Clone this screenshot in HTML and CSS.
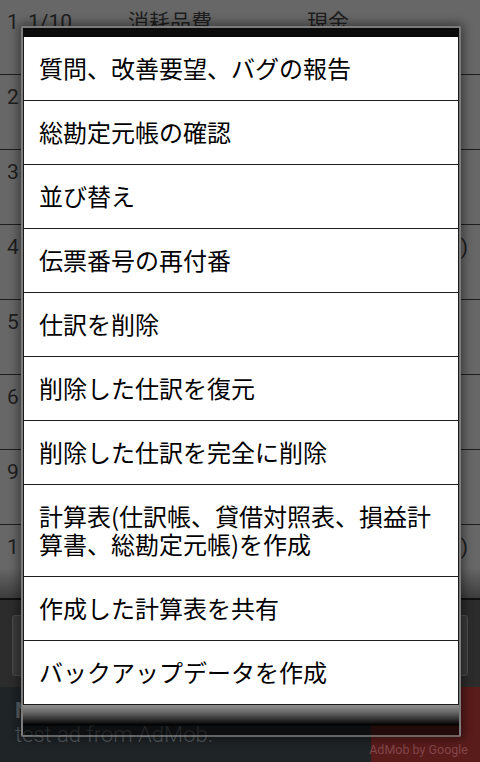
FILE: index.html
```html
<!DOCTYPE html>
<html lang="ja">
<head>
<meta charset="utf-8">
<title>仕訳帳</title>
<link rel="stylesheet" href="styles.css">
</head>
<body>
<div class="screen">
  <div class="app">
    <ul class="journal">
      <li class="row"><span class="no">1</span><span class="date">1/10</span><span class="debit">消耗品費</span><span class="credit">現金</span><span class="amount"></span></li>
      <li class="row"><span class="no">2</span></li>
      <li class="row"><span class="no">3</span></li>
      <li class="row"><span class="no">4</span><span class="date"></span><span class="debit"></span><span class="credit"></span><span class="amount">)</span></li>
      <li class="row"><span class="no">5</span></li>
      <li class="row"><span class="no">6</span></li>
      <li class="row"><span class="no">9</span></li>
      <li class="row"><span class="no">1</span><span class="date"></span><span class="debit"></span><span class="credit"></span><span class="amount">)</span></li>
    </ul>
    <div class="toolbar">
      <div class="tool-button"></div>
    </div>
    <div class="ad">
      <div class="ad-text"><b>N</b><br>test ad from AdMob.</div>
      <div class="ad-brand"><span>AdMob by Google</span></div>
    </div>
  </div>

  <div class="dialog">
    <div class="dialog-head"></div>
    <ul class="menu">
      <li class="menu-item">質問、改善要望、バグの報告</li>
      <li class="menu-item">総勘定元帳の確認</li>
      <li class="menu-item">並び替え</li>
      <li class="menu-item">伝票番号の再付番</li>
      <li class="menu-item">仕訳を削除</li>
      <li class="menu-item">削除した仕訳を復元</li>
      <li class="menu-item">削除した仕訳を完全に削除</li>
      <li class="menu-item">計算表(仕訳帳、貸借対照表、損益計算書、総勘定元帳)を作成</li>
      <li class="menu-item">作成した計算表を共有</li>
      <li class="menu-item">バックアップデータを作成</li>
    </ul>
    <div class="dialog-foot"></div>
  </div>
</div>
</body>
</html>
```

FILE: styles.css
```css
* {
  box-sizing: border-box;
}

html, body {
  margin: 0;
  padding: 0;
  background: #676767;
}

.screen {
  position: relative;
  width: 480px;
  height: 762px;
  overflow: hidden;
  font-family: Roboto, "Noto Sans CJK JP", sans-serif;
}

.app {
  display: flex;
  flex-direction: column;
  height: 762px;
}

/* dimmed journal list */
.journal {
  list-style: none;
  margin: 0;
  padding: 0;
  height: 598px;
  overflow: hidden;
  background: #676767;
  position: relative;
}

.journal::after {
  content: "";
  position: absolute;
  left: 0;
  right: 0;
  bottom: 0;
  height: 30px;
  background: linear-gradient(to bottom, rgba(0,0,0,0), rgba(0,0,0,0.42));
}

.row {
  display: grid;
  grid-template-columns: 21px 100px 179px 1fr auto;
  align-items: start;
  height: 75px;
  padding: 10px 12px 0 7px;
  border-bottom: 1px solid #1d1d1d;
  font-size: 21px;
  line-height: 24px;
  color: #1e1e1e;
  white-space: nowrap;
}

.amount {
  text-align: right;
}

/* bottom toolbar */
.toolbar {
  height: 89px;
  border-top: 2px solid #101010;
  background: #2c2c2c;
  padding: 15px 12px 11px 12px;
  display: flex;
}

.tool-button {
  flex: 1;
  border: 1px solid #4d4d4d;
  border-radius: 3px;
  background: #3b3b3b;
}

/* ad banner */
.ad {
  height: 75px;
  display: flex;
  background: #1f2427;
}

.ad-text {
  flex: 1;
  padding: 12px 0 0 15px;
  font-size: 22px;
  line-height: 24px;
  font-weight: 300;
  color: #565d61;
  white-space: nowrap;
  overflow: hidden;
}

.ad-text b {
  font-weight: 700;
  color: #5a6165;
}

.ad-brand {
  width: 109px;
  background: #5a1b1b;
  display: flex;
  align-items: flex-end;
  justify-content: flex-end;
  padding: 0 12px 5px 0;
  font-size: 12.5px;
  color: #80464a;
  white-space: nowrap;
}

/* dialog */
.dialog {
  position: absolute;
  left: 21px;
  top: 26px;
  width: 440px;
  border: 2px solid #7b7b7b;
  border-bottom-color: rgba(123,123,123,0.75);
  border-radius: 2px;
  box-shadow: 0 0 10px 3px rgba(0,0,0,0.4);
}

.dialog-head {
  height: 9px;
  background: #0b0b0b;
}

.menu {
  list-style: none;
  margin: 0;
  padding: 0;
  background: #ffffff;
  border-left: 1px solid #1a1a1a;
  border-right: 1px solid #1a1a1a;
}

.menu-item {
  padding: 17px 15px 18px 15px;
  font-family: "Noto Sans CJK JP", sans-serif;
  font-size: 24px;
  line-height: 28px;
  color: #000;
  border-bottom: 1px solid #1c1c1c;
}

.dialog-foot {
  height: 30px;
  background: linear-gradient(to bottom, #8f8f8f 0px, #6a6a6a 7px, #1a1a1a 17px, #000 20px, rgba(0,0,0,0.6) 21px, rgba(0,0,0,0.6) 30px);
}
```
